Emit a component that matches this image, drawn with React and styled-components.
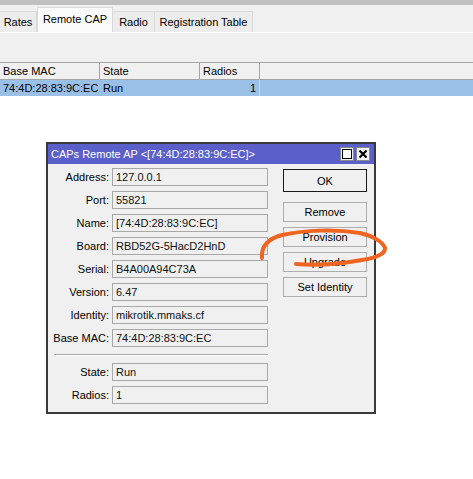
import React from "react";
import styled, { createGlobalStyle } from "styled-components";

const GlobalStyle = createGlobalStyle`
  html, body {
    margin: 0;
    padding: 0;
    background: #ffffff;
  }
  body {
    font-family: "Liberation Sans", Arial, sans-serif;
    font-size: 11px;
    color: #000;
  }
`;

const Page = styled.div`
  position: relative;
  width: 473px;
  height: 479px;
  overflow: hidden;
  background: #fff;
`;

const TopStrip = styled.div`
  height: 5px;
  background: #c0c0c0;
`;

const TabBar = styled.div`
  display: flex;
  align-items: flex-end;
  height: 27px;
  background: #f0f0f0;
`;

const Tab = styled.div`
  box-sizing: border-box;
  width: ${(p) => p.$w}px;
  height: ${(p) => (p.$active ? 25 : 21)}px;
  display: flex;
  align-items: center;
  justify-content: center;
  padding-bottom: ${(p) => (p.$active ? 2 : 0)}px;
  background: ${(p) => (p.$active ? "#fafafa" : "#ececec")};
  border: 1px solid #d9d9d9;
  border-bottom: none;
  margin-left: ${(p) => (p.$active ? 0 : -1)}px;
  font-size: 11px;
  white-space: nowrap;
  &:first-child {
    margin-left: 0;
    border-left: none;
  }
`;

const Toolbar = styled.div`
  height: 29px;
  border-top: 1px solid #ffffff;
  border-bottom: 1px solid #a6a6a6;
  background: #f0f0f0;
`;

const Grid = styled.div`
  display: grid;
  grid-template-columns: 100px 100px 60px 1fr;
`;

const HeadRow = styled(Grid)`
  height: 16px;
  background: #f0f0f0;
  border-bottom: 1px solid #a6a6a6;
`;

const HeadCell = styled.div`
  display: flex;
  align-items: center;
  padding-left: 3px;
  border-right: ${(p) => (p.$last ? "none" : "1px solid #a6a6a6")};
  font-size: 11px;
`;

const DataRow = styled(Grid)`
  height: 16px;
  background: #9ac0e8;
`;

const DataCell = styled.div`
  display: flex;
  align-items: center;
  justify-content: ${(p) => (p.$right ? "flex-end" : "flex-start")};
  padding: 0 3px;
  border-right: ${(p) => (p.$divider ? "1px solid #c6dbf1" : "none")};
  font-size: 11px;
  white-space: nowrap;
`;

const WorkArea = styled.div`
  padding: 46px 0 0 46px;
`;

const Dialog = styled.div`
  width: 326px;
  border: 2px solid #3a3a3a;
  background: #f0f0f0;
`;

const TitleBar = styled.div`
  display: flex;
  align-items: center;
  height: 20px;
  padding: 0 4px 0 3px;
  background: #5b5fc9;
  color: #fff;
  font-size: 11px;
`;

const TitleText = styled.div`
  flex: 1;
  white-space: nowrap;
`;

const TitleButtons = styled.div`
  display: flex;
  gap: 2px;
`;

const TitleButton = styled.div`
  box-sizing: border-box;
  width: 14px;
  height: 14px;
  display: flex;
  align-items: center;
  justify-content: center;
  background: #f0f0f0;
  border: 1px solid #8a8a8a;
`;

const Body = styled.div`
  display: flex;
  padding: 4px 6px 8px 4px;
  gap: 15px;
`;

const Form = styled.div`
  display: flex;
  flex-direction: column;
  gap: 5px;
`;

const FieldRow = styled.div`
  display: flex;
  align-items: center;
  gap: 3px;
  height: 18px;
`;

const Label = styled.div`
  width: 57px;
  text-align: right;
  font-size: 11px;
  white-space: nowrap;
`;

const Field = styled.div`
  box-sizing: border-box;
  width: 156px;
  height: 18px;
  display: flex;
  align-items: center;
  padding-left: 3px;
  border: 1px solid #a8a8a8;
  background: #f0f0f0;
  font-size: 11px;
  color: #111;
  white-space: nowrap;
`;

const Separator = styled.div`
  height: 1px;
  margin: 2px 0 2px 2px;
  background: #a8a8a8;
  border-bottom: 1px solid #fff;
`;

const Buttons = styled.div`
  display: flex;
  flex-direction: column;
  gap: 5px;
  padding-top: 1px;
`;

const Button = styled.div`
  box-sizing: border-box;
  width: 84px;
  height: ${(p) => (p.$primary ? 23 : 20)}px;
  margin-bottom: ${(p) => (p.$primary ? 5 : 0)}px;
  display: flex;
  align-items: center;
  justify-content: center;
  background: #f0f0f0;
  border: 1px solid ${(p) => (p.$primary ? "#1a1a1a" : "#adadad")};
  font-size: 11px;
`;

const Scribble = styled.svg`
  position: absolute;
  top: 0;
  left: 0;
  pointer-events: none;
`;

const fields = [
  ["Address", "127.0.0.1"],
  ["Port", "55821"],
  ["Name", "[74:4D:28:83:9C:EC]"],
  ["Board", "RBD52G-5HacD2HnD"],
  ["Serial", "B4A00A94C73A"],
  ["Version", "6.47"],
  ["Identity", "mikrotik.mmaks.cf"],
  ["Base MAC", "74:4D:28:83:9C:EC"],
];

const status = [
  ["State", "Run"],
  ["Radios", "1"],
];

const tabs = [
  ["Rates", 37],
  ["Remote CAP", 76, true],
  ["Radio", 43],
  ["Registration Table", 99],
];

export default function App() {
  return (
    <Page>
      <GlobalStyle />
      <TopStrip />
      <TabBar>
        {tabs.map(([name, w, active]) => (
          <Tab key={name} $w={w} $active={active}>
            {name}
          </Tab>
        ))}
      </TabBar>
      <Toolbar />
      <HeadRow>
        <HeadCell>Base MAC</HeadCell>
        <HeadCell>State</HeadCell>
        <HeadCell>Radios</HeadCell>
        <HeadCell $last />
      </HeadRow>
      <DataRow>
        <DataCell>74:4D:28:83:9C:EC</DataCell>
        <DataCell>Run</DataCell>
        <DataCell $right $divider>
          1
        </DataCell>
        <DataCell />
      </DataRow>

      <WorkArea>
        <Dialog>
          <TitleBar>
            <TitleText>CAPs Remote AP &lt;[74:4D:28:83:9C:EC]&gt;</TitleText>
            <TitleButtons>
              <TitleButton>
                <svg width="10" height="10" viewBox="0 0 10 10">
                  <rect x="0.5" y="0.5" width="9" height="9" fill="#fff" stroke="#000" strokeWidth="1" />
                </svg>
              </TitleButton>
              <TitleButton>
                <svg width="10" height="10" viewBox="0 0 10 10">
                  <path d="M1.5 1.5 L8.5 8.5 M8.5 1.5 L1.5 8.5" stroke="#000" strokeWidth="2.2" />
                </svg>
              </TitleButton>
            </TitleButtons>
          </TitleBar>
          <Body>
            <Form>
              {fields.map(([label, value]) => (
                <FieldRow key={label}>
                  <Label>{label}:</Label>
                  <Field>{value}</Field>
                </FieldRow>
              ))}
              <Separator />
              {status.map(([label, value]) => (
                <FieldRow key={label}>
                  <Label>{label}:</Label>
                  <Field>{value}</Field>
                </FieldRow>
              ))}
            </Form>
            <Buttons>
              <Button $primary>OK</Button>
              <Button>Remove</Button>
              <Button>Provision</Button>
              <Button>Upgrade</Button>
              <Button>Set Identity</Button>
            </Buttons>
          </Body>
        </Dialog>
      </WorkArea>

      <Scribble width="473" height="479" viewBox="0 0 473 479">
        <path
          d="M262 258 C261 247 267 239 282 235 C305 230 335 229 360 233 C373 236 383 242 385 248 C386 254 375 258 362 260 C340 264 318 266 296 264"
          fill="none"
          stroke="#ee6420"
          strokeWidth="4"
          strokeLinecap="round"
          strokeLinejoin="round"
        />
      </Scribble>
    </Page>
  );
}
